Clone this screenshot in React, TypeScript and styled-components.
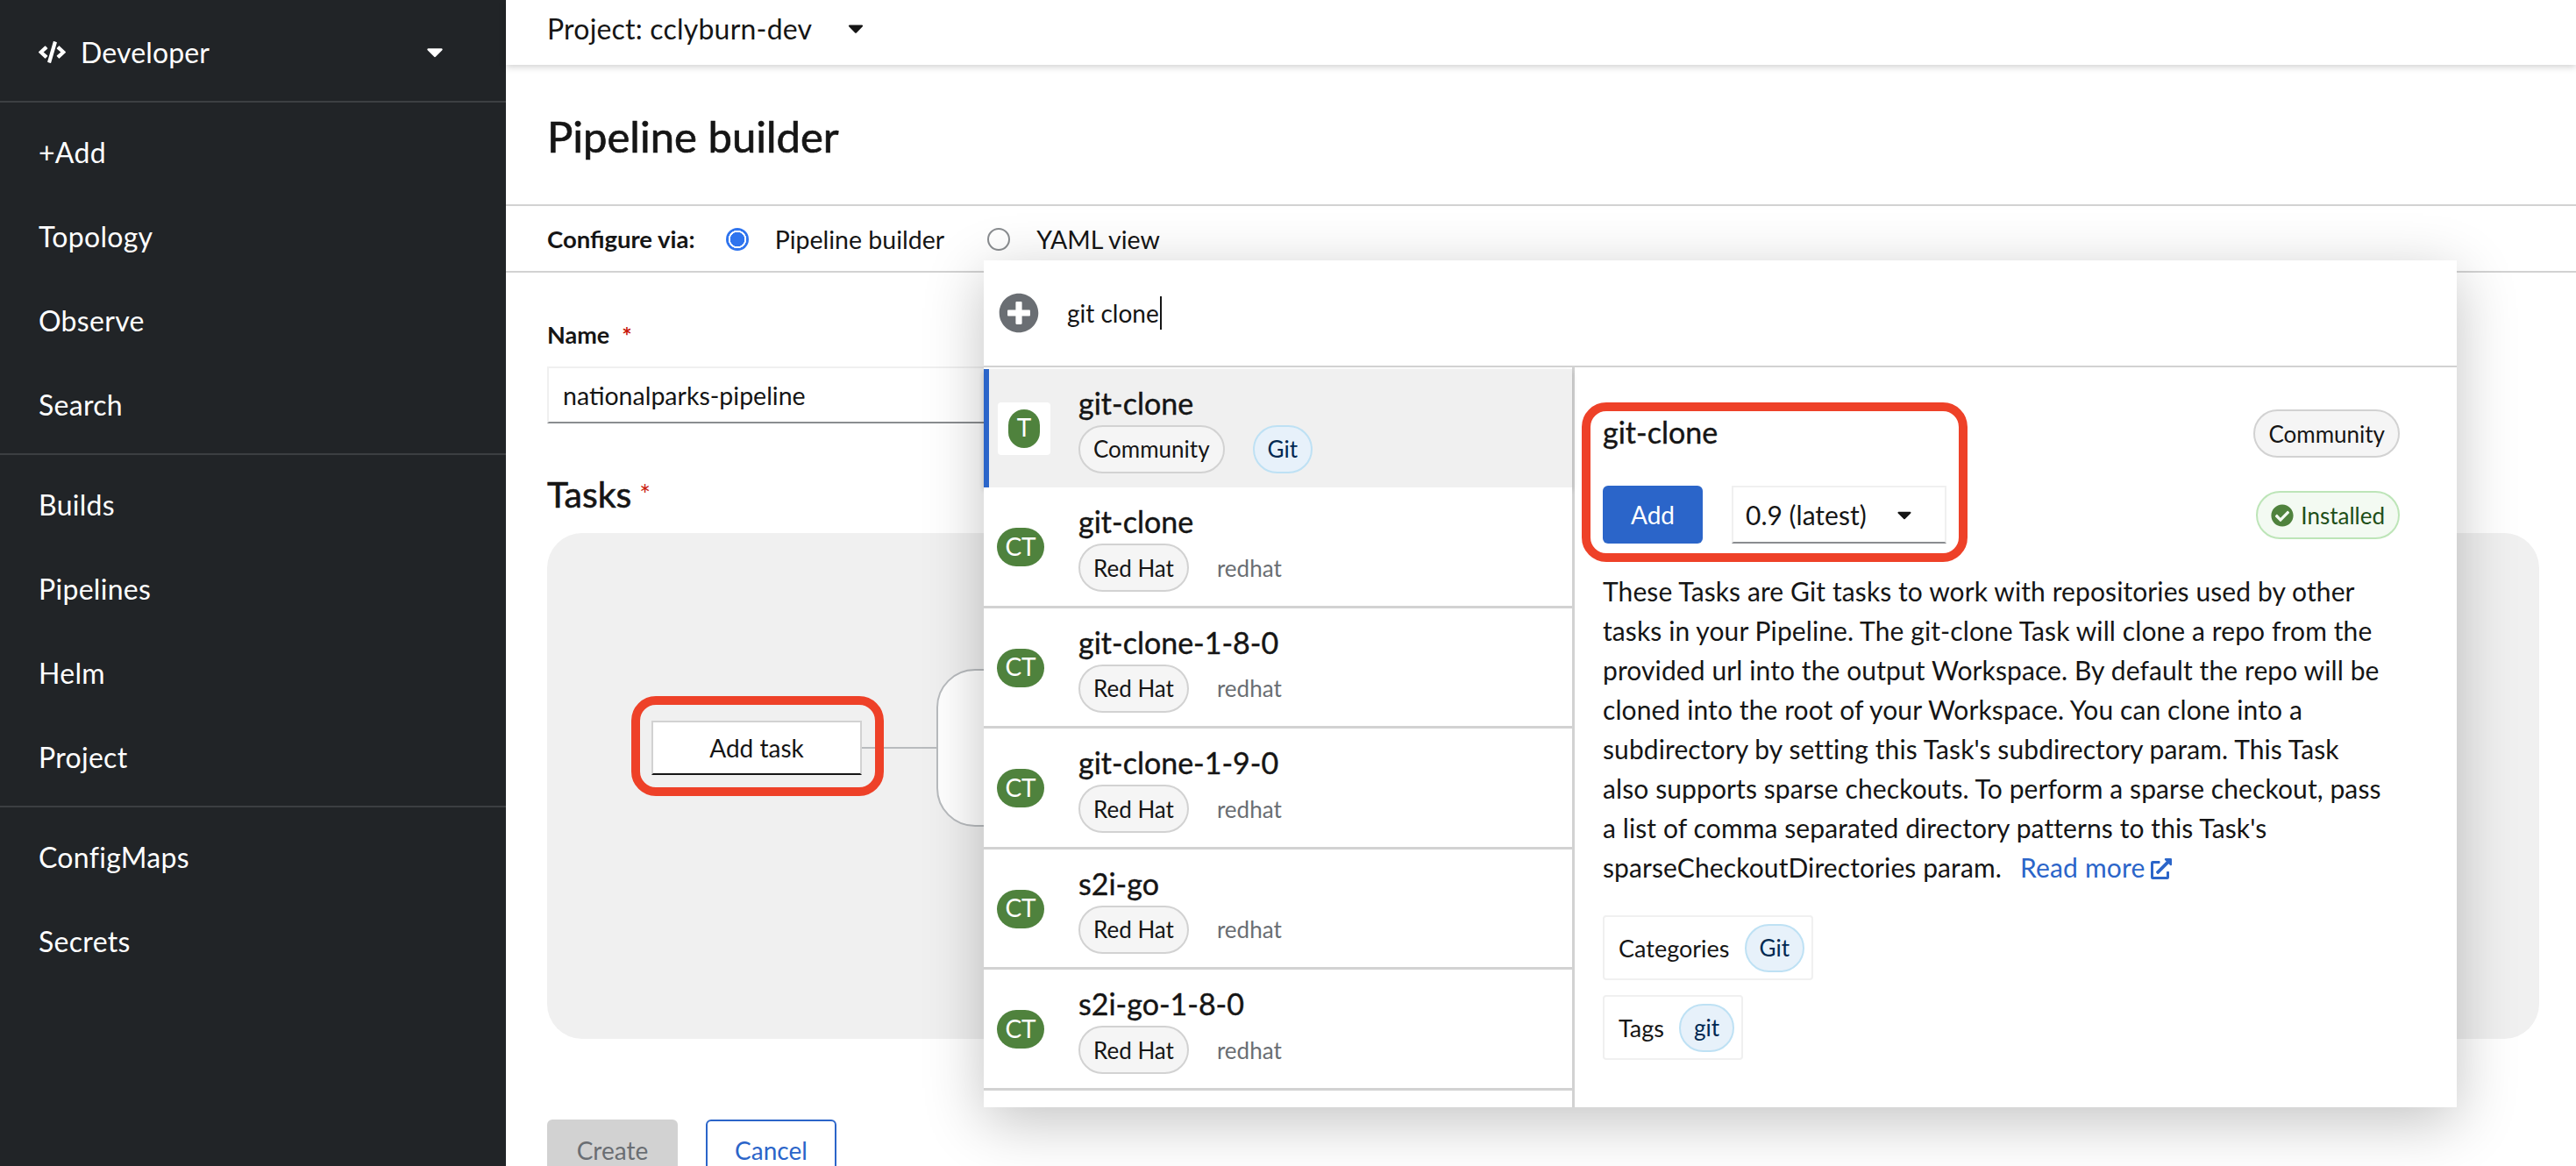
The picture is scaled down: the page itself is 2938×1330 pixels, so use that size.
import React from 'react';
import styled, { createGlobalStyle } from 'styled-components';
import { FaCaretDown, FaCheckCircle, FaCode, FaExternalLinkAlt, FaPlusCircle } from 'react-icons/fa';

const GlobalStyle = createGlobalStyle`
  html, body {
    margin: 0;
    padding: 0;
    background: #fff;
  }
  body {
    font-family: "Lato", "Liberation Sans", sans-serif;
    color: #151515;
    font-size: 28px;
  }
  * { box-sizing: border-box; }
`;

const Shell = styled.div`
  position: relative;
  display: flex;
  width: 2938px;
  height: 1330px;
  overflow: hidden;
`;

const Sidebar = styled.aside`
  flex: 0 0 577px;
  background: #212427;
  color: #fff;
`;

const Perspective = styled.div`
  display: flex;
  align-items: center;
  height: 117px;
  padding: 3px 0 0 44px;
  border-bottom: 2px solid #3c3f42;
  font-size: 32px;
  letter-spacing: 0.15px;
  svg:first-child { font-size: 31px; margin-right: 17px; }
  span { flex: 1; }
  svg:last-child { font-size: 30px; margin-right: 66px; }
`;

const NavGroup = styled.nav<{ $last?: boolean }>`
  padding: 8px 0;
  border-bottom: ${p => (p.$last ? 'none' : '2px solid #3c3f42')};
`;

const NavItem = styled.div`
  display: flex;
  align-items: center;
  height: 96px;
  padding-left: 44px;
  font-size: 32px;
  letter-spacing: 0.3px;
`;

const Main = styled.main`
  flex: 1;
  min-width: 0;
`;

const TopBar = styled.div`
  position: relative;
  display: flex;
  align-items: center;
  height: 74px;
  padding: 0 0 10px 47px;
  font-size: 32px;
  letter-spacing: 0.2px;
  box-shadow: 0 2px 8px rgba(3, 3, 3, 0.2);
  svg { margin-left: 36px; font-size: 28px; }
`;

const TitleBar = styled.div`
  display: flex;
  align-items: center;
  height: 161px;
  padding: 2px 0 0 47px;
  border-bottom: 2px solid #d2d2d2;
`;

const PageTitle = styled.h1`
  margin: 0;
  font-size: 49px;
  font-weight: 400;
  -webkit-text-stroke: 0.7px #151515;
`;

const ConfigureRow = styled.div`
  display: flex;
  align-items: center;
  height: 76px;
  padding: 1px 0 0 47px;
  border-bottom: 2px solid #d2d2d2;
`;

const ConfigureLabel = styled.strong`
  font-size: 27.5px;
  font-weight: 700;
  margin-right: 35px;
`;

const RadioMark = styled.span<{ $checked?: boolean }>`
  width: 26px;
  height: 26px;
  border-radius: 50%;
  flex: none;
  background: ${p => (p.$checked ? 'radial-gradient(circle, #2f74ee 0 8px, #fff 8.5px 10px, #2f74ee 10.5px)' : '#fff')};
  border: ${p => (p.$checked ? 'none' : '2px solid #8a8d90')};
`;

const RadioLabel = styled.span`
  font-size: 28.5px;
  margin: 0 49px 0 30px;
`;

const FormArea = styled.div`
  padding: 0 0 0 47px;
`;

const NameLabel = styled.div`
  display: flex;
  align-items: center;
  height: 40px;
  margin-top: 50px;
  font-size: 27px;
  font-weight: 700;
`;

const Required = styled.span`
  color: #c9190b;
  margin: 3px 0 0 14px;
`;

const NameInput = styled.div`
  display: flex;
  align-items: center;
  width: 800px;
  height: 65px;
  margin-top: 17px;
  padding: 0 16px;
  border: 2px solid #f0f0f0;
  border-bottom-color: #8a8d90;
  font-size: 28.5px;
`;

const TasksHeading = styled.h2`
  display: flex;
  align-items: center;
  height: 50px;
  margin: 55px 0 0;
  font-size: 41px;
  font-weight: 400;
  -webkit-text-stroke: 0.6px #151515;
`;

const TasksRequired = styled.span`
  color: #c9190b;
  font-size: 30px;
  margin-left: 9px;
  -webkit-text-stroke: 0;
`;

const Canvas = styled.div`
  display: flex;
  width: 2272px;
  height: 577px;
  margin-top: 20px;
  padding: 155px 0 0 96px;
  align-items: flex-start;
  border-radius: 40px;
  background: #f0f0f0;
`;

const CanvasRow = styled.div`
  display: flex;
  align-items: center;
`;

const Highlight = styled.div`
  display: flex;
  align-items: center;
  border: 10px solid #ee4128;
  border-radius: 28px;
`;

const TaskHighlight = styled(Highlight)`
  padding: 18px 0 14px 13px;
  margin-bottom: 4px;
`;

const AddTaskButton = styled.div`
  display: flex;
  align-items: center;
  justify-content: center;
  width: 240px;
  height: 62px;
  background: #fff;
  border: 2px solid #d2d2d2;
  border-bottom: 2px solid #151515;
  font-size: 28px;
`;

const Stub = styled.div<{ $width: number }>`
  width: ${p => p.$width}px;
  height: 2px;
  background: #b8bbbe;
`;

const TaskNode = styled.div`
  width: 420px;
  height: 180px;
  background: #fff;
  border: 2px solid #b8bbbe;
  border-radius: 44px;
`;

const Actions = styled.div`
  display: flex;
  gap: 32px;
  margin-top: 92px;
`;

const ActionButton = styled.div<{ $primary?: boolean }>`
  display: flex;
  align-items: center;
  justify-content: center;
  width: 149px;
  height: 70px;
  border-radius: 6px;
  font-size: 28px;
  background: ${p => (p.$primary ? '#d2d2d2' : '#fff')};
  color: ${p => (p.$primary ? '#6a6e73' : '#2b65c9')};
  border: ${p => (p.$primary ? 'none' : '2px solid #2b65c9')};
`;

const Popover = styled.section`
  position: absolute;
  left: 1122px;
  top: 297px;
  width: 1680px;
  height: 966px;
  background: #fff;
  box-shadow: 0 16px 64px rgba(3, 3, 3, 0.24);
`;

const SearchBar = styled.div`
  display: flex;
  align-items: center;
  height: 122px;
  padding-left: 17px;
  border-bottom: 2px solid #d2d2d2;
  svg { font-size: 46px; color: #6a6e73; }
`;

const SearchText = styled.div`
  margin-left: 32px;
  font-size: 28px;
  padding-right: 1px;
  border-right: 2px solid #151515;
  height: 38px;
  line-height: 38px;
`;

const Columns = styled.div`
  display: flex;
`;

const ResultList = styled.div`
  flex: 0 0 671px;
  padding-top: 2px;
`;

const ResultRow = styled.div<{ $selected?: boolean }>`
  display: grid;
  grid-template-columns: 108px 1fr;
  align-items: center;
  height: ${p => (p.$selected ? 135 : 137.5)}px;
  padding-top: ${p => (p.$selected ? 0 : 2)}px;
  background: ${p => (p.$selected ? '#f0f0f0' : '#fff')};
  border-bottom: ${p => (p.$selected ? 'none' : '3px solid #d2d2d2')};
  box-shadow: ${p => (p.$selected ? 'inset 6px 0 0 #2b65c9, 0 3px 6px rgba(3, 3, 3, 0.16)' : 'none')};
  position: relative;
`;

const IconSlot = styled.div<{ $selected?: boolean }>`
  padding-left: ${p => (p.$selected ? 16 : 15)}px;
`;

const IconBox = styled.div`
  display: flex;
  align-items: center;
  justify-content: center;
  width: 60px;
  height: 60px;
  background: #fff;
  border-radius: 4px;
`;

const KindBadge = styled.div<{ $wide?: boolean }>`
  display: flex;
  align-items: center;
  justify-content: center;
  width: ${p => (p.$wide ? 54 : 36)}px;
  height: 44px;
  border-radius: 22px;
  background: #4f823d;
  color: #fff;
  font-size: 28px;
  padding-bottom: 3px;
`;

const ResultBody = styled.div`
  display: flex;
  flex-direction: column;
`;

const ResultName = styled.div`
  font-size: 34px;
  line-height: 44px;
  -webkit-text-stroke: 0.4px #151515;
`;

const ResultMeta = styled.div`
  display: flex;
  align-items: center;
  gap: 32px;
  margin-top: 3px;
`;

const Pill = styled.span<{ $tone?: 'grey' | 'blue' | 'green' }>`
  display: inline-flex;
  align-items: center;
  height: 55px;
  padding: 0 15px;
  border-radius: 28px;
  font-size: 26px;
  white-space: nowrap;
  border: 2px solid ${p => (p.$tone === 'blue' ? '#bee1f4' : p.$tone === 'green' ? '#bde5b8' : '#d2d2d2')};
  background: ${p => (p.$tone === 'blue' ? '#e7f1fa' : p.$tone === 'green' ? '#f3faf2' : '#f5f5f5')};
  color: ${p => (p.$tone === 'blue' ? '#002952' : p.$tone === 'green' ? '#1e4f18' : '#151515')};
  svg { color: #4f823d; font-size: 26px; margin-right: 8px; }
`;

const Publisher = styled.span`
  font-size: 26px;
  color: #6a6e73;
`;

const Detail = styled.div`
  flex: 1;
  height: 844px;
  padding: 40px 0 0 8px;
  border-left: 3px solid #d2d2d2;
`;

const DetailTop = styled.div`
  display: flex;
  justify-content: space-between;
  padding-right: 65px;
`;

const DetailHighlight = styled(Highlight)`
  display: block;
  width: 440px;
  height: 182px;
  padding: 2px 14px 0 14px;
`;

const DetailName = styled.div`
  font-size: 34px;
  line-height: 44px;
  -webkit-text-stroke: 0.4px #151515;
`;

const DetailControls = styled.div`
  display: flex;
  gap: 33px;
  margin-top: 39px;
`;

const AddButton = styled.div`
  display: flex;
  align-items: center;
  justify-content: center;
  width: 114px;
  height: 66px;
  border-radius: 6px;
  background: #2b65c9;
  color: #fff;
  font-size: 28px;
`;

const VersionSelect = styled.div`
  display: flex;
  align-items: center;
  justify-content: space-between;
  width: 245px;
  height: 66px;
  padding: 0 33px 0 14px;
  border: 2px solid #f0f0f0;
  border-bottom-color: #8a8d90;
  font-size: 30px;
  svg { font-size: 26px; }
`;

const DetailBadges = styled.div`
  display: flex;
  flex-direction: column;
  align-items: flex-end;
  gap: 38px;
  padding-top: 8px;
`;

const Description = styled.div`
  margin: 11px 0 0 24px;
  font-size: 30px;
  line-height: 45px;
  letter-spacing: 0.1px;
`;

const DescriptionLine = styled.div`
  white-space: nowrap;
`;

const ReadMore = styled.span`
  color: #2b65c9;
  margin-left: 21px;
  letter-spacing: 0.2px;
  svg { font-size: 24px; margin-left: 6px; vertical-align: -2px; }
`;

const PropertyList = styled.div`
  display: flex;
  flex-direction: column;
  align-items: flex-start;
  gap: 17px;
  margin: 32px 0 0 24px;
`;

const PropertyBox = styled.div`
  display: flex;
  align-items: center;
  gap: 17px;
  height: 74px;
  padding: 0 8px 0 16px;
  border: 2px solid #f0f0f0;
  border-radius: 4px;
  font-size: 27px;
`;

const descriptionLines = [
  'These Tasks are Git tasks to work with repositories used by other',
  'tasks in your Pipeline. The git-clone Task will clone a repo from the',
  'provided url into the output Workspace. By default the repo will be',
  'cloned into the root of your Workspace. You can clone into a',
  "subdirectory by setting this Task's subdirectory param. This Task",
  'also supports sparse checkouts. To perform a sparse checkout, pass',
  "a list of comma separated directory patterns to this Task's",
];

const navGroups = [
  ['+Add', 'Topology', 'Observe', 'Search'],
  ['Builds', 'Pipelines', 'Helm', 'Project'],
  ['ConfigMaps', 'Secrets'],
];

const results = ['git-clone', 'git-clone-1-8-0', 'git-clone-1-9-0', 's2i-go', 's2i-go-1-8-0'];

export default function App() {
  return (
    <Shell>
      <GlobalStyle />
      <Sidebar>
        <Perspective>
          <FaCode />
          <span>Developer</span>
          <FaCaretDown />
        </Perspective>
        {navGroups.map((group, i) => (
          <NavGroup key={group[0]} $last={i === navGroups.length - 1}>
            {group.map(item => (
              <NavItem key={item}>{item}</NavItem>
            ))}
          </NavGroup>
        ))}
      </Sidebar>
      <Main>
        <TopBar>
          Project: cclyburn-dev
          <FaCaretDown />
        </TopBar>
        <TitleBar>
          <PageTitle>Pipeline builder</PageTitle>
        </TitleBar>
        <ConfigureRow>
          <ConfigureLabel>Configure via:</ConfigureLabel>
          <RadioMark $checked />
          <RadioLabel>Pipeline builder</RadioLabel>
          <RadioMark />
          <RadioLabel>YAML view</RadioLabel>
        </ConfigureRow>
        <FormArea>
          <NameLabel>
            Name<Required>*</Required>
          </NameLabel>
          <NameInput>nationalparks-pipeline</NameInput>
          <TasksHeading>
            Tasks<TasksRequired>*</TasksRequired>
          </TasksHeading>
          <Canvas>
            <CanvasRow>
              <TaskHighlight>
                <AddTaskButton>Add task</AddTaskButton>
                <Stub $width={15} />
              </TaskHighlight>
              <Stub $width={60} />
              <TaskNode />
            </CanvasRow>
          </Canvas>
          <Actions>
            <ActionButton $primary>Create</ActionButton>
            <ActionButton>Cancel</ActionButton>
          </Actions>
        </FormArea>
      </Main>
      <Popover>
        <SearchBar>
          <FaPlusCircle />
          <SearchText>git clone</SearchText>
        </SearchBar>
        <Columns>
          <ResultList>
            <ResultRow $selected>
              <IconSlot $selected>
                <IconBox>
                  <KindBadge>T</KindBadge>
                </IconBox>
              </IconSlot>
              <ResultBody>
                <ResultName>git-clone</ResultName>
                <ResultMeta>
                  <Pill>Community</Pill>
                  <Pill $tone="blue">Git</Pill>
                </ResultMeta>
              </ResultBody>
            </ResultRow>
            {results.map(name => (
              <ResultRow key={name}>
                <IconSlot>
                  <KindBadge $wide>CT</KindBadge>
                </IconSlot>
                <ResultBody>
                  <ResultName>{name}</ResultName>
                  <ResultMeta>
                    <Pill>Red Hat</Pill>
                    <Publisher>redhat</Publisher>
                  </ResultMeta>
                </ResultBody>
              </ResultRow>
            ))}
          </ResultList>
          <Detail>
            <DetailTop>
              <DetailHighlight>
                <DetailName>git-clone</DetailName>
                <DetailControls>
                  <AddButton>Add</AddButton>
                  <VersionSelect>
                    0.9 (latest)
                    <FaCaretDown />
                  </VersionSelect>
                </DetailControls>
              </DetailHighlight>
              <DetailBadges>
                <Pill>Community</Pill>
                <Pill $tone="green">
                  <FaCheckCircle />
                  Installed
                </Pill>
              </DetailBadges>
            </DetailTop>
            <Description>
              {descriptionLines.map(line => (
                <DescriptionLine key={line}>{line}</DescriptionLine>
              ))}
              <DescriptionLine>
                sparseCheckoutDirectories param.
                <ReadMore>
                  Read more
                  <FaExternalLinkAlt />
                </ReadMore>
              </DescriptionLine>
            </Description>
            <PropertyList>
              <PropertyBox>
                Categories
                <Pill $tone="blue">Git</Pill>
              </PropertyBox>
              <PropertyBox>
                Tags
                <Pill $tone="blue">git</Pill>
              </PropertyBox>
            </PropertyList>
          </Detail>
        </Columns>
      </Popover>
    </Shell>
  );
}
